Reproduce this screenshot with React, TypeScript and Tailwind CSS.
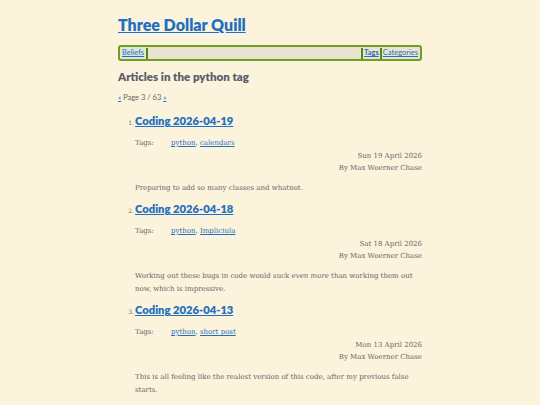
const heading = { fontFamily: 'Lato, "Noto Sans", sans-serif' }
const body = { fontFamily: '"DejaVu Serif", "Liberation Serif", serif' }

const posts = [
    {
        n: 1,
        title: "Coding 2026-04-19",
        tags: ["python", "calendars"],
        date: "Sun 19 April 2026",
        summary: <>Preparing to add so many classes and whatnot.</>,
    },
    {
        n: 2,
        title: "Coding 2026-04-18",
        tags: ["python", "Impliciula"],
        date: "Sat 18 April 2026",
        summary: <>Working out these bugs in code would suck <em>even more</em> than working them out now, which is impressive.</>,
    },
    {
        n: 3,
        title: "Coding 2026-04-13",
        tags: ["python", "short post"],
        date: "Mon 13 April 2026",
        summary: <>This is all feeling like the realest version of this code, after my previous false starts.</>,
    },
]

export default function App() {
    return (
        <div className="min-h-screen bg-[#fcf3dc] text-[#555]" style={body}>
            <div className="w-[304px] mx-auto pt-[14px]">
                <h1 className="text-[16px] font-extrabold leading-[22px] text-[#1f6fc2] underline" style={heading}>
                    Three Dollar Quill
                </h1>

                {/* nav bar */}
                <nav className="mt-[9px] h-[16px] flex items-center border-2 border-[#6f9e20] rounded-[3px] bg-[#ebe4d0] text-[7.5px] leading-none px-[1px]" style={heading}>
                    <a className="text-[#1f6fc2] underline bg-[#dfe6dc] px-[1px] py-[2px]">Beliefs</a>
                    <span className="w-[2px] h-[11px] bg-[#4f8a10] ml-[1px]" />
                    <span className="flex-1" />
                    <span className="w-[2px] h-[11px] bg-[#4f8a10] mr-[1px]" />
                    <a className="text-[#1f6fc2] underline font-bold">Tags</a>
                    <span className="w-[2px] h-[11px] bg-[#4f8a10] mx-[1px]" />
                    <a className="text-[#1f6fc2] underline pr-[1px]">Categories</a>
                </nav>

                <h2 className="mt-[8px] text-[11.5px] font-extrabold leading-[16px] text-[#56606a]" style={heading}>
                    Articles in the python tag
                </h2>

                <div className="mt-[8px] text-[7.5px] leading-[10px] text-[#666]" style={heading}>
                    <a className="text-[#1f6fc2] underline">«</a> Page 3 / 63 <a className="text-[#1f6fc2] underline">»</a>
                </div>

                <ol className="mt-[9px] pl-[17px]">
                    {posts.map((p) => (
                        <li key={p.n} className="mb-[5px]">
                            <div className="flex items-baseline">
                                <span className="w-[7px] -ml-[8px] mr-[1px] text-[6px] text-[#666] text-right">{p.n}.</span>
                                <a className="text-[11.2px] font-extrabold leading-[17px] text-[#1f6fc2] underline" style={heading}>
                                    {p.title}
                                </a>
                            </div>
                            <div className="mt-[9px] flex text-[7px] leading-[10px]">
                                <span className="w-[36px] text-[#666]">Tags:</span>
                                <span>
                                    <a className="text-[#1f6fc2] underline">{p.tags[0]}</a>,{" "}
                                    <a className="text-[#1f6fc2] underline">{p.tags[1]}</a>
                                </span>
                            </div>
                            <div className="mt-[2px] text-right text-[7px] leading-[12px] text-[#666]">
                                <div>{p.date}</div>
                                <div>By Max Woerner Chase</div>
                            </div>
                            <p className="mt-[8px] text-[7px] leading-[13px] text-[#666]">{p.summary}</p>
                        </li>
                    ))}
                </ol>
            </div>
        </div>
    )
}
